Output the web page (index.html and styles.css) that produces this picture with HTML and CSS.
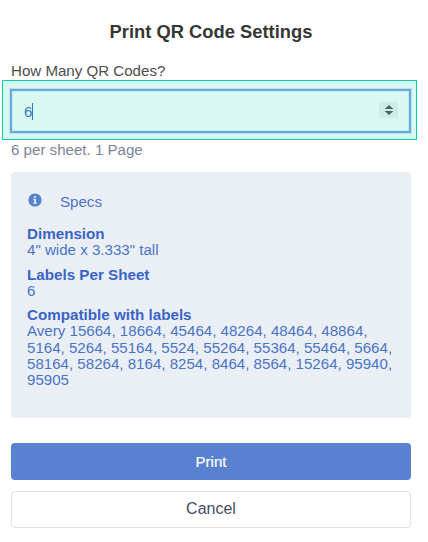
FILE: index.html
```
<!DOCTYPE html>
<html lang="en">
<head>
  <meta charset="UTF-8">
  <title>Print QR Code Settings</title>
  <link rel="stylesheet" href="styles.css">
</head>
<body>

<form class="modal">
  <h2 class="title">Print QR Code Settings</h2>
  <label class="label" for="count">How Many QR Codes?</label>
  <div class="highlight">
    <div class="field" id="count">
      <span class="value">6</span>
      <span class="caret"></span>
      <span class="spinner">
        <svg width="10" height="12" viewBox="0 0 10 12" fill="#3f6660">
          <path d="M5 1 L9.3 5 H0.7 Z"/>
          <path d="M5 11 L9.3 7 H0.7 Z"/>
        </svg>
      </span>
    </div>
  </div>
  <p class="hint">6 per sheet. 1 Page</p>

  <div class="specs">
    <div class="specs-head">
      <svg class="info" width="14" height="14" viewBox="0 0 14 14">
        <circle cx="7" cy="7" r="6.6" fill="#5581cf"/>
        <path d="M6 2.9 H8 V4.7 H6 Z M5.2 5.8 H8 V9.6 H8.9 V10.8 H5.2 V9.6 H6.1 V7 H5.2 Z" fill="#dfe7f4"/>
      </svg>
      <span>Specs</span>
    </div>
    <dl class="list">
      <dt class="term">Dimension</dt>
      <dd class="desc">4" wide x 3.333" tall</dd>
      <dt class="term">Labels Per Sheet</dt>
      <dd class="desc">6</dd>
      <dt class="term">Compatible with labels</dt>
      <dd class="desc">Avery 15664, 18664, 45464, 48264, 48464, 48864, 5164, 5264, 55164, 5524, 55264, 55364, 55464, 5664, 58164, 58264, 8164, 8254, 8464, 8564, 15264, 95940, 95905</dd>
    </dl>
  </div>

  <button type="submit" class="btn btn-print">Print</button>
  <button type="button" class="btn btn-cancel">Cancel</button>
</form>

</body>
</html>
```
FILE: styles.css
```
* {
  box-sizing: border-box;
}
body {
  margin: 0;
  background-color: #fff;
  font-family: "Liberation Sans", Arial, sans-serif;
  overflow: hidden;
}
.modal {
  width: 424px;
  height: 542px;
  padding: 20px 13px 0 11px;
  display: flex;
  flex-direction: column;
}
.title {
  margin: 0;
  height: 24px;
  line-height: 24px;
  font-size: 18.35px;
  text-align: center;
  color: #363636;
}
.label {
  margin-top: 18px;
  height: 18px;
  line-height: 18px;
  font-size: 15.1px;
  color: #4e4e4e;
}
.highlight {
  margin: 0 -6px 0 -9px;
  height: 60px;
  padding: 8px 5px 6px 7px;
  border: 1px solid #00d4a4;
  background-color: #daf8f2;
}
.field {
  height: 44px;
  padding: 0 11px 0 12px;
  border: 2px solid #68a9de;
  box-shadow: 0 0 0 1px #b9e3ea, inset 0 0 0 1px #c5ecec;
  display: flex;
  align-items: center;
  font-size: 15.1px;
  color: #3478bd;
}
.caret {
  width: 1px;
  height: 17px;
  background-color: #3478bd;
}
.spinner {
  margin: -2px 0 0 auto;
  width: 19px;
  height: 16px;
  display: flex;
  align-items: center;
  justify-content: center;
  background-color: #ceece6;
}
.hint {
  margin: 0;
  height: 32px;
  line-height: 19px;
  font-size: 15.1px;
  color: #7d8399;
}
.specs {
  height: 246px;
  padding: 20px 16px 0;
  border-radius: 4px;
  background-color: #eaeff6;
  color: #4a74ca;
  font-size: 15.1px;
  line-height: 16.3px;
}
.specs-head {
  height: 20px;
  line-height: 20px;
  display: flex;
  gap: 18px;
}
.info {
  margin: 1px 0 0 1px;
}
.list {
  margin: 14px 0 0;
}
.term {
  font-weight: bold;
  font-size: 15.2px;
  color: #3a64c8;
}
.desc {
  margin: 0 0 8px;
}
.btn {
  flex: none;
  height: 37px;
  padding: 0 0 1px;
  border-radius: 4px;
  font-family: inherit;
  font-size: 16px;
}
.btn-print {
  margin-top: 25px;
  border: none;
  background-color: #5882cf;
  color: #fff;
  font-size: 15px;
  -webkit-text-stroke: 0.2px #fff;
}
.btn-cancel {
  margin-top: 11px;
  border: 1px solid #dfe1e6;
  background-color: #fff;
  color: #454d66;
}
```
